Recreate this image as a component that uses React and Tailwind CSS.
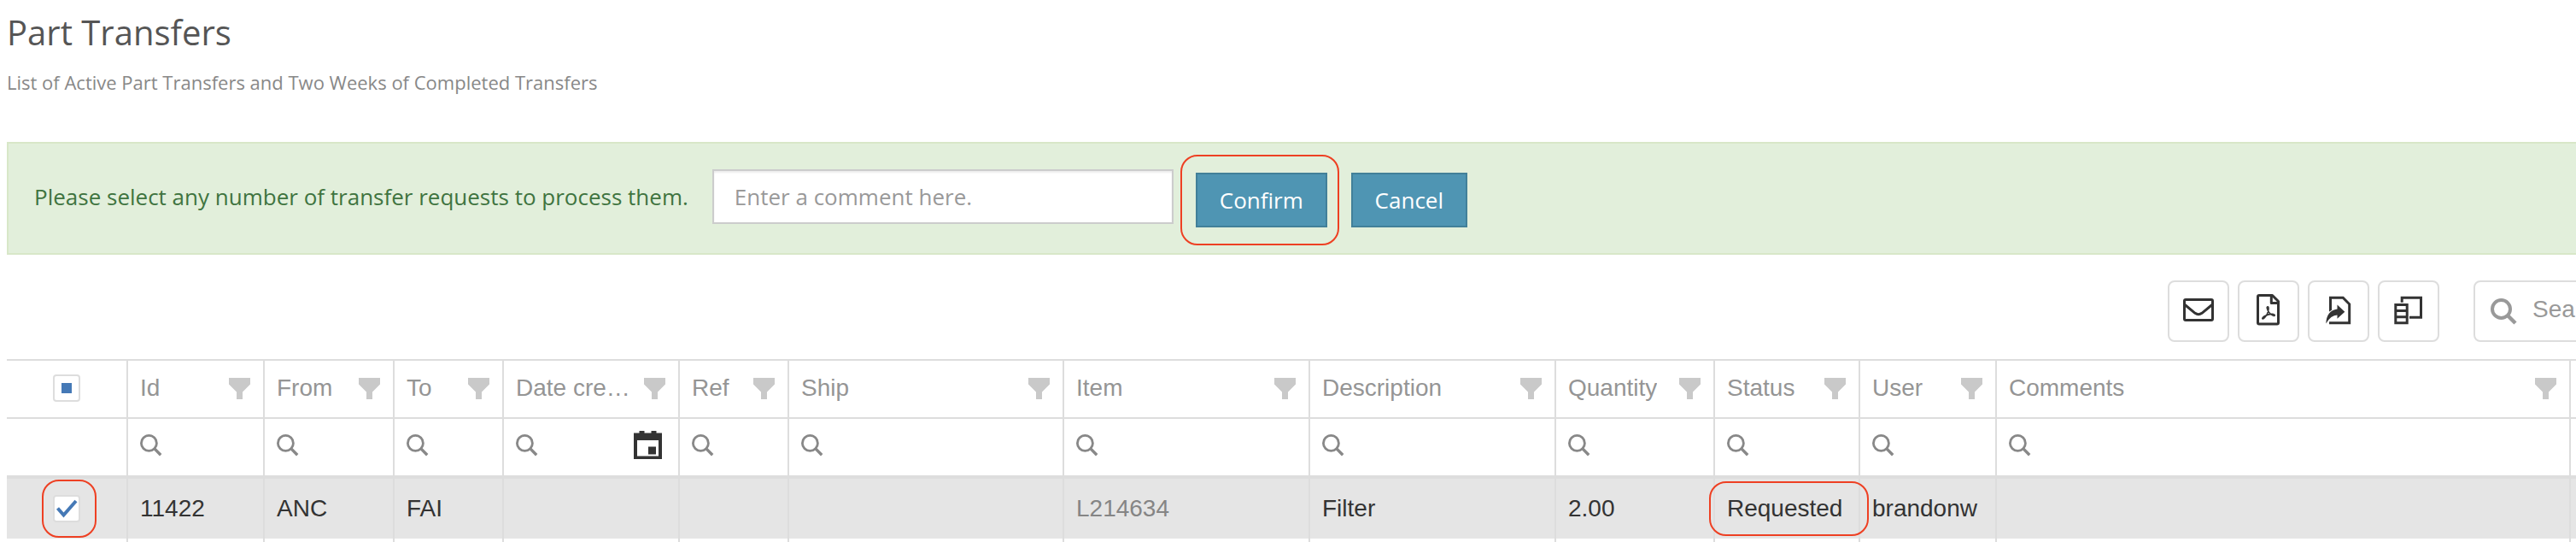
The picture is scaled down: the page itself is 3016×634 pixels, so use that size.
import React from "react";

const columns = [
  { name: "Id", width: 160, value: "11422" },
  { name: "From", width: 152, value: "ANC" },
  { name: "To", width: 128, value: "FAI" },
  { name: "Date created", width: 206, value: "", date: true },
  { name: "Ref", width: 128, value: "" },
  { name: "Ship", width: 322, value: "" },
  { name: "Item", width: 288, value: "L214634", muted: true },
  { name: "Description", width: 288, value: "Filter" },
  { name: "Quantity", width: 186, value: "2.00" },
  { name: "Status", width: 170, value: "Requested", marked: true },
  { name: "User", width: 160, value: "brandonw" },
  { name: "Comments", value: "" },
];

function Funnel() {
  return (
    <svg className="h-[25px] w-[25px]" viewBox="0 0 25 25" fill="#c9c9c9" aria-hidden="true">
      <path d="M0 0H25V7.5L16 16.5V25H9V16.5L0 7.5Z" />
    </svg>
  );
}

function Magnifier() {
  return (
    <svg className="h-[26px] w-[26px] shrink-0" viewBox="0 0 26 26" fill="none" stroke="#888" aria-hidden="true">
      <circle cx="10.4" cy="10.4" r="9" strokeWidth="2.8" />
      <path d="M16.4 16.4L24.2 24.2" strokeWidth="3.4" />
    </svg>
  );
}

function LargeMagnifier() {
  return (
    <svg className="h-[31px] w-[31px] shrink-0" viewBox="0 0 31 31" fill="none" stroke="#999" aria-hidden="true">
      <circle cx="12.5" cy="12.5" r="10.5" strokeWidth="4" />
      <path d="M19.5 19.5L29 29" strokeWidth="4.5" />
    </svg>
  );
}

function Calendar() {
  return (
    <svg className="h-[34px] w-[34px]" viewBox="0 0 34 34" aria-hidden="true">
      <path
        fill="#333"
        fillRule="evenodd"
        d="M0 2.5H6.5V0H12.5V2.5H20.5V0H26.5V2.5H33V33H0ZM4 11V29.5H29V11Z"
      />
      <path fill="#333" d="M17 18.5H26V27.5H17Z" />
    </svg>
  );
}

const actions = [
  {
    label: "Email",
    icon: (
      <g fill="none" stroke="#333" strokeWidth="3">
        <rect x="3.5" y="6.5" width="33" height="24" rx="1.5" />
        <path d="M3.5 12L16 22.3Q20 25.2 24 22.3L36.5 12" />
      </g>
    ),
  },
  {
    label: "Export to PDF",
    icon: (
      <g fill="none" stroke="#333" strokeWidth="3" strokeLinejoin="round">
        <path d="M9 1.5H24.5L31.5 8.5V33.5Q31.5 35 30 35H9Q7.5 35 7.5 33.5V3Q7.5 1.5 9 1.5Z" />
        <path d="M23.3 2V10.5H31.5" />
        <path
          strokeWidth="1.6"
          d="M18.5 15Q20.3 14 20 17.5Q19.5 23 15.5 27.5Q13.5 29.5 12.8 28.8Q12.5 27.5 16 25.5Q21 23 25.5 23.5Q27.8 24 27 25.3Q25.5 26 22.5 23.5Q19 20.5 18.3 16.5Q18 15.5 18.5 15Z"
        />
      </g>
    ),
  },
  {
    label: "Share",
    icon: (
      <g>
        <path fill="none" stroke="#333" strokeWidth="3" d="M10.5 20.5V4.3H25.2L32.7 11.8V33.8H9" />
        <path
          fill="#333"
          stroke="#fff"
          strokeWidth="2"
          paintOrder="stroke"
          d="M5.3 34.5Q5.8 19.5 18.5 17.5V12.5L27.3 20.8L18.5 28.8V24.5Q11 24.5 5.3 34.5Z"
        />
      </g>
    ),
  },
  {
    label: "Column chooser",
    icon: (
      <g fill="none" stroke="#333" strokeWidth="3">
        <path d="M12.2 9.8V4.3H34.5V27.2H21" />
        <path d="M4.8 12.5H18.2V33.8H4.8ZM4.8 19.5H18.2M4.8 26.7H18.2" />
      </g>
    ),
  },
];

const button = "relative mt-2 h-16 border-2 border-[#428099] bg-[#4f95b3] text-white";

export default function App() {
  return (
    <main className="overflow-x-hidden bg-white pl-2 font-['Liberation_Sans',Arial,sans-serif] text-[28px] leading-8 text-[#333]">
      <header className="pt-3 font-['Open_Sans',sans-serif]">
        <h1 className="text-[40px] leading-[52px] text-[#555]">Part Transfers</h1>
        <p className="mt-4 text-[22px] leading-8 text-[#888]">
          List of Active Part Transfers and Two Weeks of Completed Transfers
        </p>
      </header>

      <section className="mt-[54px] flex h-[132px] items-center border-2 border-r-0 border-[#d8e7c8] bg-[#e2efdb] pb-1 pl-[30px] font-['Open_Sans',sans-serif] text-[26px] text-[#3f7440]">
        <label htmlFor="comment">Please select any number of transfer requests to process them.</label>
        <input
          id="comment"
          type="text"
          placeholder="Enter a comment here."
          className="ml-7 h-16 w-[540px] border-2 border-[#ccc] bg-white px-6 text-[#555] shadow-[inset_0_2px_2px_rgba(0,0,0,0.08)] outline-none placeholder:text-[#999]"
        />
        <button type="button" className={button + " ml-[26px] w-[154px]"}>
          Confirm
          <span className="pointer-events-none absolute -inset-y-[23px] -right-4 -left-5 rounded-[20px] border-2 border-[#ee4023]" />
        </button>
        <button type="button" className={button + " ml-7 w-[136px]"}>
          Cancel
        </button>
      </section>

      <div className="mt-[30px] -mr-48 flex justify-end gap-[10px]">
        {actions.map((a) => (
          <button
            key={a.label}
            type="button"
            aria-label={a.label}
            className="flex h-[72px] w-[72px] items-center justify-center rounded-lg border-2 border-[#ddd] bg-white"
          >
            <svg className="h-10 w-10" viewBox="0 0 40 40" aria-hidden="true">
              {a.icon}
            </svg>
          </button>
        ))}
        <label className="ml-[30px] flex h-[72px] w-[312px] items-center rounded-lg border-2 border-[#ddd] pl-[18px]">
          <LargeMagnifier />
          <input
            type="search"
            aria-label="Search"
            placeholder="Search..."
            className="ml-[18px] w-full min-w-0 bg-transparent pb-1 outline-none placeholder:text-[#999]"
          />
        </label>
      </div>

      <table className="mt-5 w-full table-fixed border-separate border-spacing-0">
        <colgroup>
          <col className="w-[142px]" />
          {columns.map((c) => (
            <col key={c.name} style={c.width ? { width: c.width } : undefined} />
          ))}
          <col className="w-[6px]" />
        </colgroup>
        <thead>
          <tr className="h-[70px]">
            <th className="border-y-2 border-r-2 border-[#ddd] p-0 pb-[2px]">
              <div className="flex justify-center">
                <span className="grid">
                  <input
                    type="checkbox"
                    aria-label="Select all rows"
                    className="col-start-1 row-start-1 h-8 w-8 appearance-none rounded border-2 border-[#ddd] bg-white"
                  />
                  <span className="pointer-events-none col-start-1 row-start-1 h-3 w-3 place-self-center bg-[#4579b6]" />
                </span>
              </div>
            </th>
            {columns.map((c) => (
              <th
                key={c.name}
                className="border-y-2 border-r-2 border-[#ddd] p-0 pr-[15px] pb-[2px] pl-[14px] text-left font-normal text-[#959595]"
              >
                <div className="flex items-center justify-between gap-2">
                  <span className="truncate">{c.name}</span>
                  <button type="button" aria-label={"Filter " + c.name} className="shrink-0">
                    <Funnel />
                  </button>
                </div>
              </th>
            ))}
            <th className="border-y-2 border-[#ddd] p-0" />
          </tr>
          <tr className="h-[66px]">
            <td className="border-r-2 border-[#ddd] p-0" />
            {columns.map((c) => (
              <td key={c.name} className="border-r-2 border-[#ddd] p-0 px-[14px] pb-1">
                <div className="flex items-center">
                  <Magnifier />
                  <input
                    type="text"
                    aria-label={"Search " + c.name}
                    className="h-10 w-full min-w-0 bg-transparent px-2 outline-none"
                  />
                  {c.date && (
                    <button type="button" aria-label="Pick a date" className="mr-1 shrink-0">
                      <Calendar />
                    </button>
                  )}
                </div>
              </td>
            ))}
            <td className="p-0" />
          </tr>
        </thead>
        <tbody>
          <tr className="h-[74px] bg-[#e5e5e5]">
            <td className="relative border-t-4 border-r-2 border-[#ddd] p-0">
              <div className="flex justify-center">
                <span className="grid">
                  <input
                    type="checkbox"
                    defaultChecked
                    aria-label="Select row 11422"
                    className="col-start-1 row-start-1 h-8 w-8 appearance-none rounded border-2 border-[#ddd] bg-white"
                  />
                  <svg
                    className="pointer-events-none col-start-1 row-start-1 h-8 w-8"
                    viewBox="0 0 32 32"
                    fill="none"
                    stroke="#4579b6"
                    strokeWidth="4"
                    aria-hidden="true"
                  >
                    <path d="M5.5 15.5L12.5 23.5L27 7" />
                  </svg>
                </span>
              </div>
              <span className="pointer-events-none absolute inset-y-[1px] left-[41px] w-16 rounded-[20px] border-2 border-[#ee4023]" />
            </td>
            {columns.map((c) => (
              <td key={c.name} className="relative border-t-4 border-r-2 border-[#ddd] p-0 px-[14px]">
                <span className={c.muted ? "text-[#858585]" : "text-[#333]"}>{c.value}</span>
                {c.marked && (
                  <span className="pointer-events-none absolute inset-y-[3px] -right-[12px] -left-[7px] z-10 rounded-[20px] border-2 border-[#ee4023]" />
                )}
              </td>
            ))}
            <td className="border-t-4 border-[#ddd] p-0" />
          </tr>
          <tr className="h-1">
            <td className="border-r-2 border-[#ddd] p-0" />
            {columns.map((c) => (
              <td key={c.name} className="border-r-2 border-[#ddd] p-0" />
            ))}
            <td className="p-0" />
          </tr>
        </tbody>
      </table>
    </main>
  );
}
